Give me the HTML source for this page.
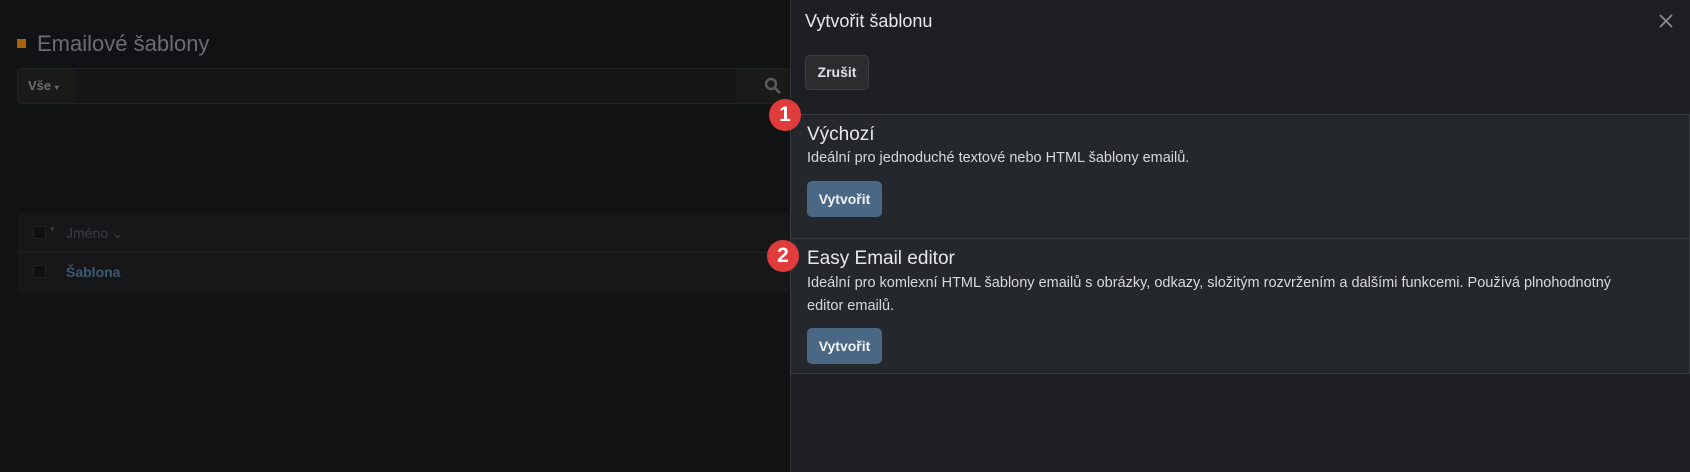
<!DOCTYPE html>
<html><head><meta charset="utf-8"><style>
*{box-sizing:border-box;margin:0;padding:0}
body{width:1690px;height:472px;background:#111213;font-family:"Liberation Sans",sans-serif;position:relative;overflow:hidden}
.a{position:absolute}
.panel{left:790px;top:0;width:900px;height:472px;background:#1d1f23;border-left:1px solid #2e3135}
.card{left:790px;width:900px;background:#24272c;border:1px solid #373a3f}
.btn{background:#4a6784;color:#f0f2f5;font-weight:bold;font-size:14px;border-radius:5px;width:75px;height:36px;line-height:36px;text-align:center}
.ct{font-size:19px;color:#e6e8eb}
.cd{font-size:14.5px;color:#d6d9dd;line-height:23px;white-space:nowrap}
.badge{width:32px;height:32px;border-radius:50%;background:#e03c3c;color:#fff;font-weight:bold;font-size:21px;text-align:center;line-height:32px}
</style></head><body>
<div class="a" style="left:17px;top:39px;width:9px;height:9px;background:#a8620b"></div>
<div class="a" style="left:37px;top:31px;font-size:22px;color:#6a6d72">Emailové šablony</div>
<div class="a" style="left:17px;top:68px;width:773px;height:36px;background:#151617;border:1px solid #1f2123;border-radius:4px"></div>
<div class="a" style="left:18px;top:69px;width:58px;height:34px;background:#1a1a19;color:#6a6b6d;font-weight:bold;font-size:13px;line-height:34px;padding-left:10px">Vše <span style="font-size:8px">▾</span></div>
<div class="a" style="left:736px;top:69px;width:54px;height:34px;background:#1a1a19"></div>
<svg class="a" style="left:764px;top:77px" width="18" height="18"><circle cx="7" cy="7" r="5" stroke="#5a5c60" stroke-width="2.4" fill="none"/><path d="M11 11l5 5" stroke="#5a5c60" stroke-width="2.6"/></svg>
<div class="a" style="left:17px;top:213px;width:773px;height:80px;background:#161719;border-radius:5px"></div>
<div class="a" style="left:17px;top:252px;width:773px;height:1px;background:#1e2022"></div>
<div class="a" style="left:33px;top:226px;width:13px;height:13px;background:#0f1011;border:1px solid #222;border-radius:2px"></div>
<div class="a" style="left:50px;top:224px;font-size:9px;color:#3c3e42">▾</div>
<div class="a" style="left:66px;top:225px;font-size:14px;color:#3a3d42">Jméno ⌄</div>
<div class="a" style="left:33px;top:265px;width:13px;height:13px;background:#0f1011;border:1px solid #222;border-radius:2px"></div>
<div class="a" style="left:66px;top:264px;font-size:14px;font-weight:bold;color:#3f5873">Šablona</div>

<div class="a panel"></div>
<div class="a" style="left:805px;top:11px;font-size:18px;color:#e6e8eb">Vytvořit šablonu</div>
<svg class="a" style="left:1658px;top:13px" width="16" height="16"><path d="M2 2l12 12M14 2L2 14" stroke="#8a8d92" stroke-width="1.8"/></svg>
<div class="a" style="left:805px;top:55px;width:64px;height:35px;background:#2b2c2e;border:1px solid #3d3f42;border-radius:5px;color:#dfe1e4;font-size:14px;font-weight:bold;text-align:center;line-height:33px">Zrušit</div>

<div class="a card" style="top:114px;height:125px"></div>
<div class="a ct" style="left:807px;top:124px">Výchozí</div>
<div class="a cd" style="left:807px;top:147px">Ideální pro jednoduché textové nebo HTML šablony emailů.</div>
<div class="a btn" style="left:807px;top:181px">Vytvořit</div>

<div class="a card" style="top:238px;height:136px"></div>
<div class="a ct" style="left:807px;top:248px">Easy Email editor</div>
<div class="a cd" style="left:807px;top:272px">Ideální pro komlexní HTML šablony emailů s obrázky, odkazy, složitým rozvržením a dalšími funkcemi. Používá plnohodnotný<br>editor emailů.</div>
<div class="a btn" style="left:807px;top:328px">Vytvořit</div>

<div class="a badge" style="left:769px;top:99px">1</div>
<div class="a badge" style="left:767px;top:240px">2</div>
</body></html>
